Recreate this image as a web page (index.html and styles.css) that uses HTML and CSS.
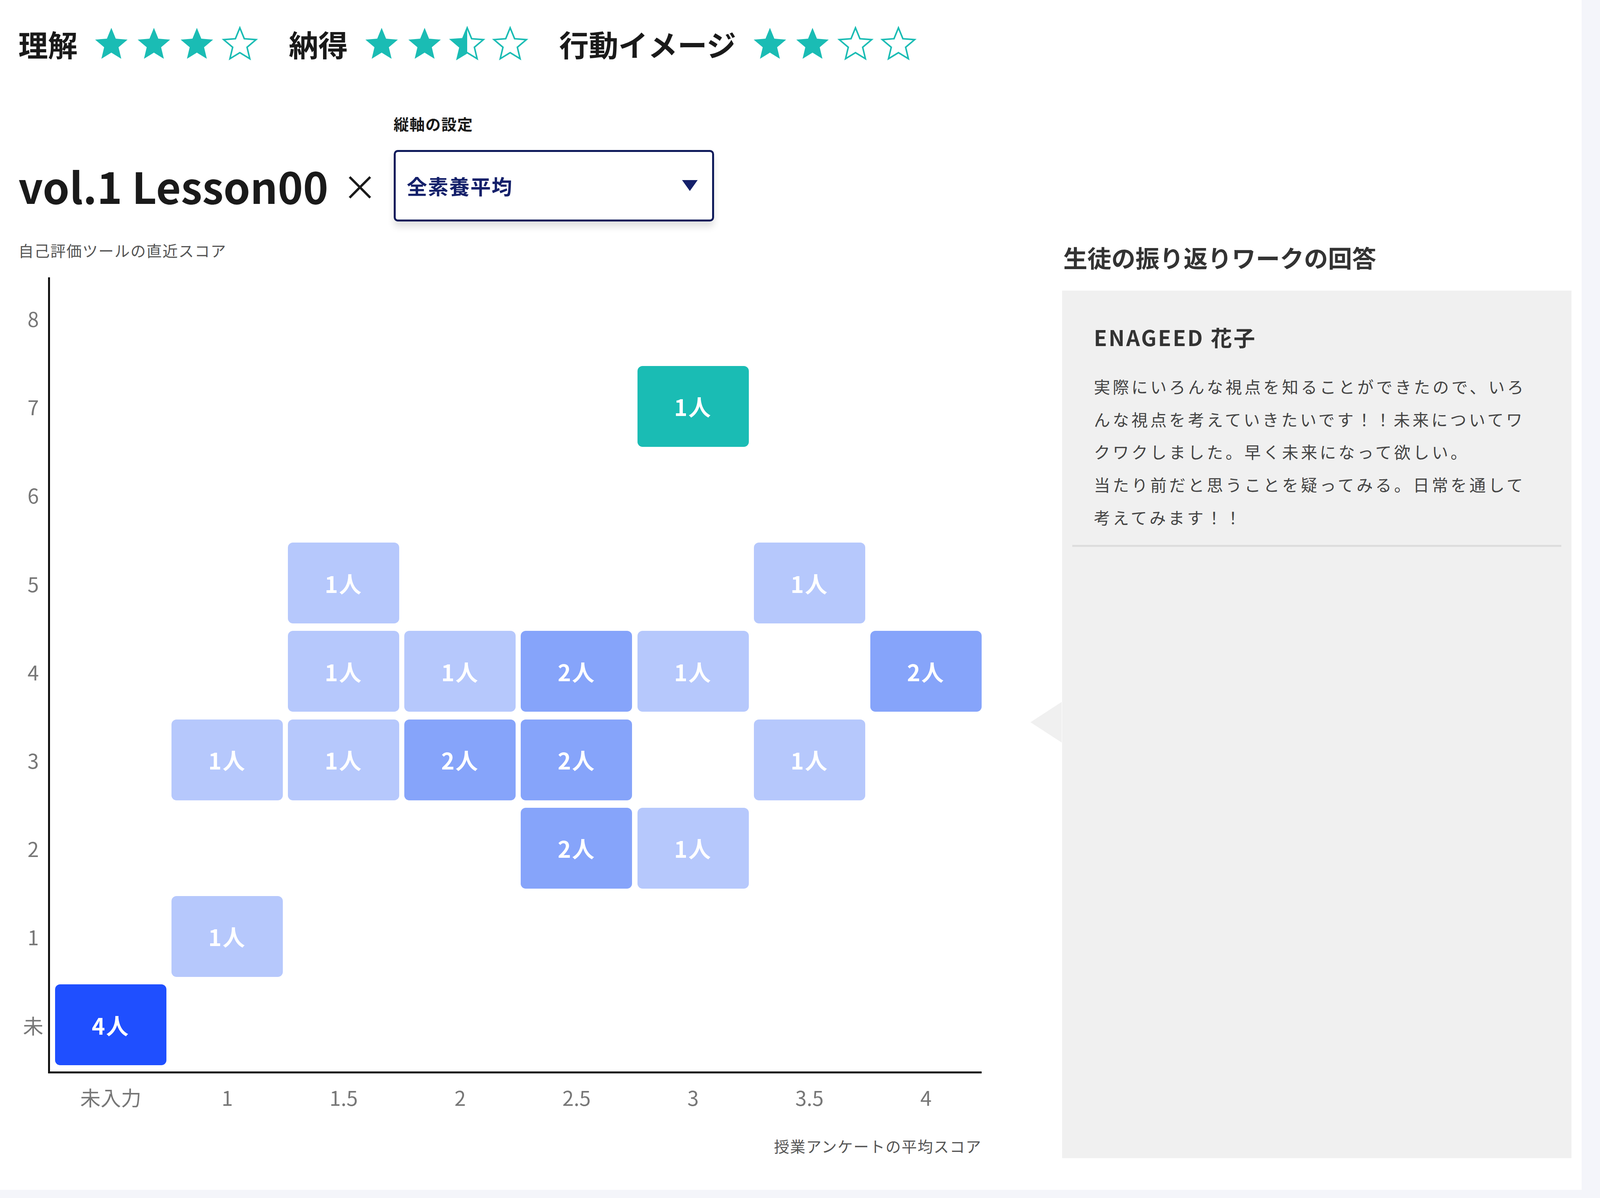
FILE: index.html
```html
<!DOCTYPE html>
<html lang="ja">
<head>
    <meta charset="UTF-8">
    <meta name="viewport" content="width=device-width, initial-scale=1.0">
    <title>授業の振り返り</title>
    <link rel="stylesheet" href="styles.css">
</head>
<body>
    <svg class="defs" width="0" height="0">
        <defs>
            <linearGradient id="half-fill">
                <stop offset="50%" stop-color="#1abcb4"/>
                <stop offset="50%" stop-color="#ffffff"/>
            </linearGradient>
            <symbol id="star" viewBox="0 0 24 24">
                <polygon points="12,1.6 14.9,8.7 22.6,9.3 16.7,14.3 18.5,21.8 12,17.8 5.5,21.8 7.3,14.3 1.4,9.3 9.1,8.7"/>
            </symbol>
        </defs>
    </svg>

    <div class="page">
        <!-- 評価 -->
        <div class="ratings">
            <div class="rating">
                <span class="rating-label">理解</span>
                <svg class="star full"><use href="#star"/></svg>
                <svg class="star full"><use href="#star"/></svg>
                <svg class="star full"><use href="#star"/></svg>
                <svg class="star empty"><use href="#star"/></svg>
            </div>
            <div class="rating">
                <span class="rating-label">納得</span>
                <svg class="star full"><use href="#star"/></svg>
                <svg class="star full"><use href="#star"/></svg>
                <svg class="star half"><use href="#star"/></svg>
                <svg class="star empty"><use href="#star"/></svg>
            </div>
            <div class="rating">
                <span class="rating-label">行動イメージ</span>
                <svg class="star full"><use href="#star"/></svg>
                <svg class="star full"><use href="#star"/></svg>
                <svg class="star empty"><use href="#star"/></svg>
                <svg class="star empty"><use href="#star"/></svg>
            </div>
        </div>

        <div class="header">
            <h1 class="title">vol.1 Lesson00</h1>
            <span class="times">×</span>
            <div class="axis-setting">
                <div class="select-label">縦軸の設定</div>
                <div class="select">
                    <span>全素養平均</span>
                    <span class="caret"></span>
                </div>
            </div>
        </div>

        <div class="content">
            <div class="chart-col">
                <div class="caption">自己評価ツールの直近スコア</div>
                <div class="chart">
                    <div class="y-axis">
                        <span>8</span><span>7</span><span>6</span><span>5</span><span>4</span>
                        <span>3</span><span>2</span><span>1</span><span>未</span>
                    </div>
                    <div class="plot">
                        <div class="cell me" style="grid-area: 2 / 6">1人</div>

                        <div class="cell light" style="grid-area: 4 / 3">1人</div>
                        <div class="cell light" style="grid-area: 4 / 7">1人</div>

                        <div class="cell light" style="grid-area: 5 / 3">1人</div>
                        <div class="cell light" style="grid-area: 5 / 4">1人</div>
                        <div class="cell mid" style="grid-area: 5 / 5">2人</div>
                        <div class="cell light" style="grid-area: 5 / 6">1人</div>
                        <div class="cell mid" style="grid-area: 5 / 8">2人</div>

                        <div class="cell light" style="grid-area: 6 / 2">1人</div>
                        <div class="cell light" style="grid-area: 6 / 3">1人</div>
                        <div class="cell mid" style="grid-area: 6 / 4">2人</div>
                        <div class="cell mid" style="grid-area: 6 / 5">2人</div>
                        <div class="cell light" style="grid-area: 6 / 7">1人</div>

                        <div class="cell mid" style="grid-area: 7 / 5">2人</div>
                        <div class="cell light" style="grid-area: 7 / 6">1人</div>

                        <div class="cell light" style="grid-area: 8 / 2">1人</div>

                        <div class="cell dark" style="grid-area: 9 / 1">4人</div>
                    </div>
                </div>
                <div class="x-axis">
                    <span>未入力</span><span>1</span><span>1.5</span><span>2</span>
                    <span>2.5</span><span>3</span><span>3.5</span><span>4</span>
                </div>
                <div class="x-title">授業アンケートの平均スコア</div>
            </div>

            <div class="answers-col">
                <h2 class="answers-title">生徒の振り返りワークの回答</h2>
                <div class="panel">
                    <div class="answer">
                        <div class="answer-name">ENAGEED 花子</div>
                        <p class="answer-text">実際にいろんな視点を知ることができたので、いろんな視点を考えていきたいです！！未来についてワクワクしました。早く未来になって欲しい。<br>当たり前だと思うことを疑ってみる。日常を通して考えてみます！！</p>
                    </div>
                </div>
            </div>
        </div>
    </div>
</body>
</html>
```

FILE: styles.css
```css
html {
    zoom: 2.6122;
}
body {
    margin: 0;
    background: #f4f5fa;
    font-family: "Noto Sans CJK JP", "Noto Sans", sans-serif;
    color: #1a1a1a;
}
.defs {
    position: absolute;
    width: 0;
    height: 0;
}
.page {
    width: 1550px;
    height: 1166px;
    box-sizing: border-box;
    padding-left: 18px;
    background: #fff;
    overflow: hidden;
}

/* ratings */
.ratings {
    display: flex;
    align-items: center;
    gap: 24px;
    height: 40px;
    padding-top: 23px;
}
.rating {
    display: flex;
    align-items: center;
}
.rating-label {
    font-size: 29px;
    font-weight: 700;
    line-height: 40px;
    margin-right: 15px;
}
.star {
    width: 36px;
    height: 36px;
    margin-right: 6px;
}
.star.full {
    fill: #1abcb4;
}
.star.half {
    fill: url(#half-fill);
    stroke: #1abcb4;
    stroke-width: 1;
}
.star.empty {
    fill: #fff;
    stroke: #1abcb4;
    stroke-width: 1;
}

/* header */
.header {
    display: flex;
    align-items: flex-end;
    margin-top: 48px;
}
.title {
    margin: 0;
    font-size: 42px;
    font-weight: 700;
    line-height: 70px;
}
.times {
    font-size: 34px;
    line-height: 70px;
    margin: 0 16px 0 14px;
}
.select-label {
    font-size: 15px;
    font-weight: 700;
    line-height: 20px;
    letter-spacing: 0.6px;
    margin-bottom: 16px;
}
.select {
    width: 314px;
    height: 70px;
    box-sizing: border-box;
    border: 2px solid #0e1a5a;
    border-radius: 4px;
    padding: 0 14px 0 11px;
    display: flex;
    align-items: center;
    justify-content: space-between;
    color: #14206a;
    font-size: 20px;
    font-weight: 700;
    letter-spacing: 0.8px;
    box-shadow: 0 5px 7px rgba(0, 0, 0, 0.12);
}
.caret {
    width: 0;
    height: 0;
    border-left: 8px solid transparent;
    border-right: 8px solid transparent;
    border-top: 11px solid #14206a;
}

/* chart */
.content {
    display: flex;
    margin-top: 18px;
}
.chart-col {
    width: 944px;
}
.caption {
    font-size: 15px;
    line-height: 20px;
    letter-spacing: 0.7px;
    color: #555;
    margin-bottom: 17px;
}
.chart {
    display: flex;
}
.y-axis {
    width: 29px;
    display: grid;
    grid-template-rows: repeat(9, 79.3px);
    row-gap: 7.3px;
    padding-bottom: 8px;
    font-size: 20px;
    color: #777;
}
.y-axis span {
    display: flex;
    align-items: center;
    justify-content: center;
}
.plot {
    flex: 1;
    border-left: 2px solid #111;
    border-bottom: 2px solid #111;
    padding: 0 0 6px 5px;
    display: grid;
    grid-template-columns: repeat(8, 1fr);
    grid-template-rows: repeat(9, 79.3px);
    gap: 7.3px 5px;
}
.cell {
    border-radius: 5px;
    display: flex;
    align-items: center;
    justify-content: center;
    color: #fff;
    font-size: 22px;
    font-weight: 700;
    letter-spacing: 1px;
}
.cell.light {
    background: #b6c8fc;
}
.cell.mid {
    background: #86a4fa;
}
.cell.dark {
    background: #1f4fff;
}
.cell.me {
    background: #1abcb4;
}
.x-axis {
    display: grid;
    grid-template-columns: repeat(8, 1fr);
    column-gap: 5px;
    padding-left: 36px;
    margin-top: 8px;
    font-size: 20px;
    line-height: 30px;
    color: #777;
    text-align: center;
}
.x-title {
    text-align: right;
    font-size: 15px;
    line-height: 20px;
    letter-spacing: 0.7px;
    color: #555;
    margin-top: 23px;
}

/* answers */
.answers-col {
    width: 499px;
    margin-left: 79px;
}
.answers-title {
    margin: 2px 0 18px 1px;
    font-size: 23.6px;
    font-weight: 700;
    line-height: 30px;
    color: #333;
}
.panel {
    position: relative;
    height: 850px;
    padding: 0 10px;
    background: #f0f0f0;
}
.panel::before {
    content: "";
    position: absolute;
    left: -31px;
    top: 403px;
    border-right: 31px solid #f0f0f0;
    border-top: 20px solid transparent;
    border-bottom: 20px solid transparent;
}
.answer {
    padding: 30px 30px 11px 21px;
    border-bottom: 2px solid #dddddd;
}
.answer-name {
    font-size: 21px;
    font-weight: 700;
    line-height: 30px;
    letter-spacing: 1.5px;
    color: #333;
    margin-bottom: 18px;
}
.answer-text {
    margin: 0;
    font-size: 16px;
    line-height: 32px;
    letter-spacing: 2.45px;
    color: #444;
}
```
